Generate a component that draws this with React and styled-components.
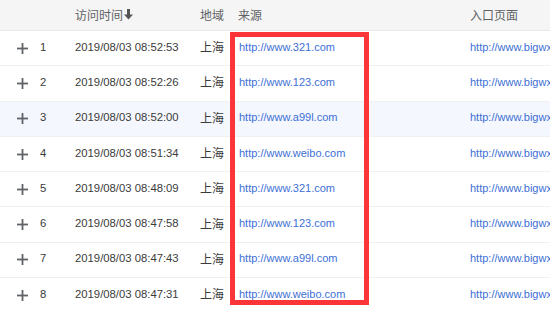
import React from "react";
import styled, { createGlobalStyle } from "styled-components";

const Global = createGlobalStyle`
  html, body { margin: 0; padding: 0; background: #fff; overflow: hidden; }
  body { font-family: "Liberation Sans", Arial, "Noto Sans CJK SC", sans-serif; }
`;

const Wrap = styled.div`
  position: relative;
  width: 550px;
  height: 312px;
  overflow: hidden;
`;

const cols = "40px 35px 125px 38px 232px 1fr";

const HeaderRow = styled.div`
  display: grid;
  grid-template-columns: ${cols};
  box-sizing: border-box;
  height: 31px;
  padding-bottom: 2px;
  align-items: center;
  background: #f5f5f5;
  border-bottom: 1px solid #e6e8ec;
  color: #606266;
  font-size: 12px;
`;

const HeadCell = styled.div`
  display: flex;
  align-items: center;
  padding-left: ${(p) => p.$pl || 0}px;
  white-space: nowrap;
`;

const Row = styled.div`
  display: grid;
  grid-template-columns: ${cols};
  box-sizing: border-box;
  height: 35.3px;
  padding-bottom: 3px;
  align-items: center;
  border-bottom: 1px solid #eef0f4;
  background: ${(p) => (p.$hl ? "#f4f7fd" : "#fff")};
  color: #3b3b3b;
  font-size: 11.3px;
`;

const Cell = styled.div`
  padding-left: ${(p) => p.$pl || 0}px;
  white-space: nowrap;
  overflow: hidden;
`;

const Cjk = styled.span`
  font-family: "Noto Sans CJK SC", "Liberation Sans", sans-serif;
  font-size: 12px;
`;

const Link = styled.span`
  color: #3d6fd6;
  font-size: 11px;
`;

const RedBox = styled.div`
  position: absolute;
  left: 230px;
  top: 32px;
  width: 139px;
  height: 273px;
  box-sizing: border-box;
  border: 5px solid #fc3638;
  pointer-events: none;
`;

const Plus = () => (
  <svg width="11" height="11" viewBox="0 0 11 11" style={{ display: "block", marginTop: 3 }}>
    <rect x="0" y="4.6" width="11" height="1.8" fill="#5f6368" />
    <rect x="4.6" y="0" width="1.8" height="11" fill="#5f6368" />
  </svg>
);

const DownArrow = () => (
  <svg width="9" height="11" viewBox="0 0 9 11" style={{ marginLeft: 1, marginTop: 1 }}>
    <rect x="3" y="0" width="3" height="6" fill="#555" />
    <polygon points="0,5.5 9,5.5 4.5,10.5" fill="#555" />
  </svg>
);

const rows = [
  ["2019/08/03 08:52:53", "http://www.321.com"],
  ["2019/08/03 08:52:26", "http://www.123.com"],
  ["2019/08/03 08:52:00", "http://www.a99l.com"],
  ["2019/08/03 08:51:34", "http://www.weibo.com"],
  ["2019/08/03 08:48:09", "http://www.321.com"],
  ["2019/08/03 08:47:58", "http://www.123.com"],
  ["2019/08/03 08:47:43", "http://www.a99l.com"],
  ["2019/08/03 08:47:31", "http://www.weibo.com"],
];

export default function App() {
  return (
    <Wrap>
      <Global />
      <HeaderRow>
        <HeadCell />
        <HeadCell />
        <HeadCell>
          <Cjk>访问时间</Cjk>
          <DownArrow />
        </HeadCell>
        <HeadCell>
          <Cjk>地域</Cjk>
        </HeadCell>
        <HeadCell>
          <Cjk>来源</Cjk>
        </HeadCell>
        <HeadCell>
          <Cjk>入口页面</Cjk>
        </HeadCell>
      </HeaderRow>
      {rows.map(([time, src], i) => (
        <Row key={i} $hl={i === 2}>
          <Cell $pl={17}>
            <Plus />
          </Cell>
          <Cell>{i + 1}</Cell>
          <Cell>{time}</Cell>
          <Cell>
            <Cjk>上海</Cjk>
          </Cell>
          <Cell $pl={1}>
            <Link>{src}</Link>
          </Cell>
          <Cell>
            <Link>http://www.bigwxx.com/index.html</Link>
          </Cell>
        </Row>
      ))}
      <RedBox />
    </Wrap>
  );
}
